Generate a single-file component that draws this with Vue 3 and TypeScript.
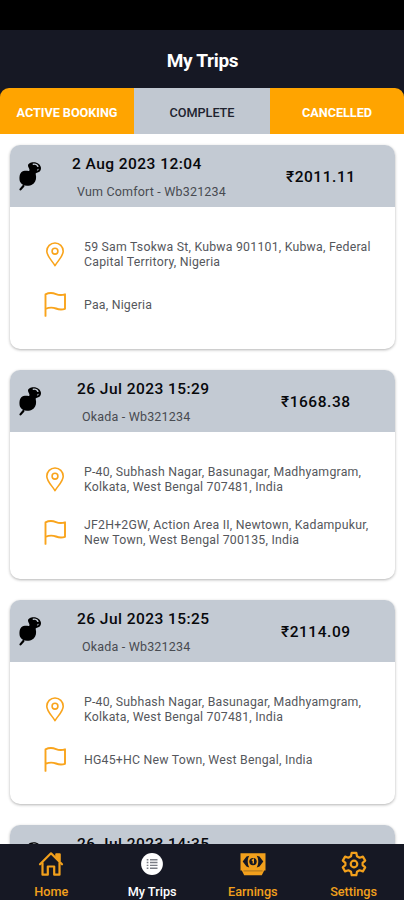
<script setup lang="ts">
interface Trip {
  date: string
  vehicle: string
  amount: string
  from: string[]
  to: string[]
  wide?: boolean
}

const tabs = [
  { label: 'ACTIVE BOOKING', selected: false },
  { label: 'COMPLETE', selected: true },
  { label: 'CANCELLED', selected: false },
]

const trips: Trip[] = [
  {
    date: '2 Aug 2023 12:04',
    vehicle: 'Vum Comfort - Wb321234',
    amount: '₹2011.11',
    from: ['59 Sam Tsokwa St, Kubwa 901101, Kubwa, Federal', 'Capital Territory, Nigeria'],
    to: ['Paa, Nigeria'],
    wide: true,
  },
  {
    date: '26 Jul 2023 15:29',
    vehicle: 'Okada - Wb321234',
    amount: '₹1668.38',
    from: ['P-40, Subhash Nagar, Basunagar, Madhyamgram,', 'Kolkata, West Bengal 707481, India'],
    to: ['JF2H+2GW, Action Area II, Newtown, Kadampukur,', 'New Town, West Bengal 700135, India'],
  },
  {
    date: '26 Jul 2023 15:25',
    vehicle: 'Okada - Wb321234',
    amount: '₹2114.09',
    from: ['P-40, Subhash Nagar, Basunagar, Madhyamgram,', 'Kolkata, West Bengal 707481, India'],
    to: ['HG45+HC New Town, West Bengal, India'],
  },
  {
    date: '26 Jul 2023 14:35',
    vehicle: '',
    amount: '',
    from: [],
    to: [],
  },
]
</script>

<template>
  <div class="screen">
    <div class="status"></div>
    <header class="header"><h1>My Trips</h1></header>
    <div class="tabs-wrap">
      <nav class="tabs">
        <button v-for="t in tabs" :key="t.label" class="tab" :class="{ selected: t.selected }">{{ t.label }}</button>
      </nav>
    </div>

    <main class="list">
      <article v-for="trip in trips" :key="trip.date" class="card">
        <div class="card-head" :class="{ wide: trip.wide }">
          <svg class="pin" viewBox="0 0 24 30">
            <path d="M10 4.500C10 2.600 12.500 1.300 15.500 1.200c3.800-.1 7.500 2.500 7.500 6.100 0 2.600-1.700 4.300-4.700 4.600-.6.100-.8.500-.6 1.200.9 3.600.4 7.200-2 9.400-1.300 1.200-3 1.900-5.200 2.200-3.800.5-7-.9-8.300-3.600C1 18.400 1.200 13.300 3.300 11.300c1.600-1.500 4.700-1.700 7-1.300.6.100 1.200-.3 1.200-1C11.400 7.400 10 6.200 10 4.500z" fill="#000" />
            <path d="M5.400 25 2.500 28.400" stroke="#000" stroke-width="2.200" stroke-linecap="round" />
            <path d="M15.300 3.200c2-.3 4 .6 4.600 2.200" stroke="#c3cad3" stroke-width="1.400" fill="none" stroke-linecap="round" />
            <path d="M20.300 8.300l-.8.700" stroke="#7b818a" stroke-width="1.200" stroke-linecap="round" />
          </svg>
          <div class="summary">
            <div class="date">{{ trip.date }}</div>
            <div class="vehicle">{{ trip.vehicle }}</div>
          </div>
          <div class="amount">{{ trip.amount }}</div>
        </div>
        <div v-if="trip.from.length" class="card-body">
          <div class="stop">
            <svg class="place" viewBox="0 0 22 25" fill="none" stroke="#f9a41c" stroke-width="1.600" stroke-linejoin="round">
              <path d="M11 23.700C8.500 19.200 2.800 14.400 2.800 9.200a8.200 8.200 0 0 1 16.400 0c0 5.200-5.700 10-8.200 14.500z" />
              <circle cx="11" cy="9.200" r="2.900" />
            </svg>
            <p class="address"><span v-for="line in trip.from" :key="line">{{ line }}</span></p>
          </div>
          <div class="stop">
            <svg class="flag" viewBox="0 0 22 25" fill="none" stroke="#f9a41c" stroke-width="1.900" stroke-linejoin="round" stroke-linecap="round">
              <path d="M1.500 23.900V2.400C5.500.3 9 .9 12 2.100c3 1.200 6 1.200 9 .2v14.500c-3 1.100-6 .9-9-.3-3-1.100-6.500-1.500-10.500.5" />
            </svg>
            <p class="address"><span v-for="line in trip.to" :key="line">{{ line }}</span></p>
          </div>
        </div>
      </article>
    </main>

    <footer class="bottom">
      <a class="item">
        <svg viewBox="0 0 26 26" fill="none" stroke="#f2a01c" stroke-width="2.200" stroke-linejoin="round" stroke-linecap="round">
          <path d="M2 13.300 13 2.300l11 11" />
          <path d="M18.300 3.300h3.400v6.200l-3.400-3.200z" fill="#f2a01c" />
          <path d="M4.500 12v11.700h5.300v-8.200h6.400v8.200h5.300V12" />
        </svg>
        <span>Home</span>
      </a>
      <a class="item active">
        <svg viewBox="0 0 26 26">
          <circle cx="13" cy="13" r="10.900" fill="#fff" />
          <g stroke="#7b7e85" stroke-width="1.400">
            <path d="M7.700 8.700h1.700M7.700 11.500h1.700M7.700 14.400h1.700M7.700 17.300h1.700M11 8.700h7.500M11 11.500h7.500M11 14.400h7.500M11 17.300h7.500" />
          </g>
        </svg>
        <span>My Trips</span>
      </a>
      <a class="item">
        <svg viewBox="0 0 26 26">
          <path d="M.5 2.300h25v17.200h-1.300l-2.400 4.800H4.200l-2.400-4.800H.5z" fill="#f2a01c" />
          <path d="M3.500 19.900h19" stroke="#8d6220" stroke-width=".7" />
          <path d="M9.300 4.800 6.500 5.600 2.700 10.600l3.800 5 2.800.8C7.200 13.200 7.200 8 9.300 4.800zM16.700 4.800l2.800.8 3.800 5-3.800 5-2.800.8c2.100-3.200 2.100-8.400 0-11.600z" fill="#161824" />
          <circle cx="13" cy="10.600" r="3.700" fill="#161824" />
          <path d="M11.800 9.500 13.300 8.600v4" stroke="#f2a01c" stroke-width="1.400" fill="none" />
        </svg>
        <span>Earnings</span>
      </a>
      <a class="item">
        <svg viewBox="0 0 26 26" fill="none" stroke="#f2a01c" stroke-width="2.200" stroke-linejoin="round">
          <path d="M10.700 1.800h4.600l.7 3.400 2.600 1.500 3.300-1.100 2.300 4-2.600 2.300v2.200l2.600 2.300-2.300 4-3.300-1.100-2.600 1.500-.7 3.400h-4.600l-.7-3.400-2.600-1.500-3.300 1.100-2.300-4 2.600-2.300v-2.200L1.800 9.600l2.300-4 3.300 1.100L10 5.200z" />
          <circle cx="13" cy="13" r="3.300" />
        </svg>
        <span>Settings</span>
      </a>
    </footer>
  </div>
</template>

<style>
body {
  background: #fff;
}
</style>

<style scoped>
.screen {
  width: 404px;
  height: 900px;
  overflow: hidden;
  display: flex;
  flex-direction: column;
  background: #fff;
  font-family: Roboto, 'Noto Sans', sans-serif;
}
.status {
  flex: none;
  height: 30px;
  background: #000;
}
.header {
  flex: none;
  height: 58px;
  display: flex;
  align-items: center;
  justify-content: center;
  background: #161824;
}
h1 {
  margin: 3px 0 0 1px;
  font-size: 19px;
  font-weight: 700;
  line-height: 24px;
  letter-spacing: -0.3px;
  color: #fff;
}
.tabs-wrap {
  flex: none;
  background: #161824;
}
.tabs {
  display: grid;
  grid-template-columns: 134px 136px 134px;
  height: 46px;
  border-radius: 9px 9px 0 0;
  overflow: hidden;
}
.tab {
  border: 0;
  padding: 2px 0 0;
  background: #ffa400;
  color: #fff;
  font: 700 12.7px Roboto, sans-serif;
  letter-spacing: -0.05px;
}
.tab.selected {
  background: #c1c8d1;
  color: #20232f;
  font-weight: 500;
}
.list {
  flex: 1;
  min-height: 0;
  overflow: hidden;
  padding: 11px 9px 0 10px;
  display: flex;
  flex-direction: column;
  gap: 21px;
}
.card {
  flex: none;
  border-radius: 10px;
  background: #fff;
  box-shadow: 0 1px 3px rgba(0, 0, 0, 0.3);
}
.card-head {
  height: 62px;
  border-radius: 10px 10px 0 0;
  background: #c3cad3;
  display: flex;
  align-items: flex-start;
}
.pin {
  flex: none;
  width: 24px;
  height: 30px;
  margin: 16px 0 0 8px;
}
.summary {
  width: 204px;
  padding: 9px 0 0 35px;
  box-sizing: border-box;
  white-space: nowrap;
}
.wide .summary {
  width: 209px;
  padding-left: 30px;
}
.date {
  font-size: 15.5px;
  line-height: 21px;
  font-weight: 500;
  letter-spacing: 0.45px;
  color: #07080b;
}
.vehicle {
  margin: 8px 0 0 5px;
  font-size: 12.5px;
  line-height: 17px;
  letter-spacing: 0.18px;
  color: #484b51;
}
.amount {
  margin: 22px 0 0 35px;
  font-size: 15.5px;
  line-height: 20px;
  font-weight: 500;
  letter-spacing: 0.55px;
  color: #07080b;
}
.card-body {
  padding: 33px 0 31px 34px;
  display: flex;
  flex-direction: column;
  gap: 23px;
}
.stop {
  display: flex;
  align-items: center;
}
.place,
.flag {
  flex: none;
  width: 22px;
  height: 25px;
  margin-bottom: 2px;
}
.flag {
  margin: -1px 0 1px;
}
.address {
  margin: 0 0 0 18px;
  font-size: 12.3px;
  line-height: 15px;
  letter-spacing: 0.22px;
  color: #55575c;
  white-space: nowrap;
}
.address span {
  display: block;
}
.bottom {
  flex: none;
  height: 56px;
  padding-left: 1px;
  display: grid;
  grid-template-columns: repeat(4, 1fr);
  background: #161824;
}
.item {
  display: flex;
  flex-direction: column;
  align-items: center;
  padding-top: 7px;
  color: #f2a01c;
  font-size: 12.7px;
  line-height: 15px;
  font-weight: 500;
}
.item svg {
  width: 26px;
  height: 26px;
}
.item span {
  margin-top: 7px;
}
.item.active {
  color: #fff;
}
</style>
